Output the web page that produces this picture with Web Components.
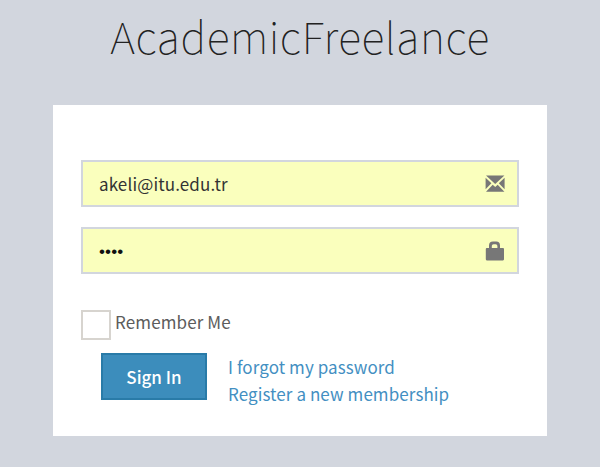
<!DOCTYPE html>
<html lang="en">
<head>
<meta charset="utf-8">
<title>AcademicFreelance</title>
<style>
html,body{margin:0;height:100%}
body{background:#d2d6de;font-family:"Noto Sans CJK SC","Open Sans",sans-serif;font-size:17px;color:#5c5c5c;overflow:hidden}
</style>
</head>
<body>
<login-page></login-page>
<script>
const define = (name, html) => customElements.define(name, class extends HTMLElement {
  constructor() {
    super();
    this.attachShadow({ mode: 'open' }).innerHTML = html;
  }
});

define('site-title', `<style>
:host{display:block;height:105px;box-sizing:border-box;padding-top:5px;text-align:center;color:#222}
h1{margin:0;font-size:43px;font-weight:100;line-height:60px;white-space:nowrap;letter-spacing:.6px}
</style><h1><slot></slot></h1>`);

define('form-field', `<style>
:host{display:flex;box-sizing:border-box;height:47px;border:2px solid #d2d6de;background:#faffbd;align-items:center;justify-content:space-between;padding:0 12px 0 16px;color:#333}
.v{line-height:24px;white-space:nowrap;letter-spacing:.13px;padding-top:var(--value-drop,0px)}
::slotted(svg){display:block}
</style><span class="v"><slot></slot></span><slot name="icon"></slot>`);

define('check-box', `<style>
:host{display:flex;align-items:center;gap:4px;height:30px;line-height:24px}
i{box-sizing:border-box;width:30px;height:30px;border:2px solid #d7d4cf;background:#fff}
span{white-space:nowrap;margin-top:-6px;letter-spacing:.12px}
</style><i></i><span><slot></slot></span>`);

define('primary-button', `<style>
:host{display:block}
button{box-sizing:border-box;width:106px;height:47px;border:2px solid #297ba8;background:#3c8dbc;color:#fff;font:500 17px/24px "Noto Sans CJK SC",sans-serif;padding:1px 0 0;display:block}
</style><button type="button"><slot></slot></button>`);

define('text-link', `<style>
:host{display:block;line-height:27px;white-space:nowrap}
a{color:#438fc2;text-decoration:none;letter-spacing:.08px}
</style><a><slot></slot></a>`);

define('login-card', `<style>
:host{display:flex;flex-direction:column;box-sizing:border-box;width:494px;height:331px;margin:0 0 0 53px;background:#fff;padding:55px 28px 0}
.fields{display:flex;flex-direction:column;gap:20px}
.remember{margin-top:36px}
.actions{display:flex;margin:13px 0 0 20px;gap:21px}
</style>
<div class="fields"><slot name="field"></slot></div>
<div class="remember"><slot name="remember"></slot></div>
<div class="actions"><slot name="action"></slot><div><slot name="link"></slot></div></div>`);

define('login-page', `<style>
:host{display:block}
.password{color:#111;font-family:"Liberation Sans",Arial,sans-serif;--value-drop:3px}
</style>
<site-title>AcademicFreelance</site-title>
<login-card>
  <form-field slot="field">akeli@itu.edu.tr
    <svg slot="icon" width="20" height="18" viewBox="0 0 20 18"><path fill="#777" d="M1 0.4H19.4L10.2 9ZM.6 2.8 6.4 8.3 .6 14.2ZM19.6 2.8V14.2L13.8 8.3ZM7.7 9.8 10.2 12.1 12.7 9.8 19.4 16.8H1Z"/></svg>
  </form-field>
  <form-field slot="field" class="password">••••
    <svg slot="icon" width="20" height="20" viewBox="0 0 20 20"><path fill="#777" d="M.8 8Q.8 7 1.8 7H4V4.5Q4 .4 8 .4H11.2Q15 .4 15 4.5V7H18Q19 7 19 8V18.3Q19 19.4 18 19.4H1.8Q.8 19.4 .8 18.3ZM6.8 7H12.4V5Q12.4 3.2 10.6 3.2H8.6Q6.8 3.2 6.8 5Z"/></svg>
  </form-field>
  <check-box slot="remember">Remember Me</check-box>
  <primary-button slot="action">Sign In</primary-button>
  <text-link slot="link">I forgot my password</text-link>
  <text-link slot="link">Register a new membership</text-link>
</login-card>`);
</script>
</body>
</html>
